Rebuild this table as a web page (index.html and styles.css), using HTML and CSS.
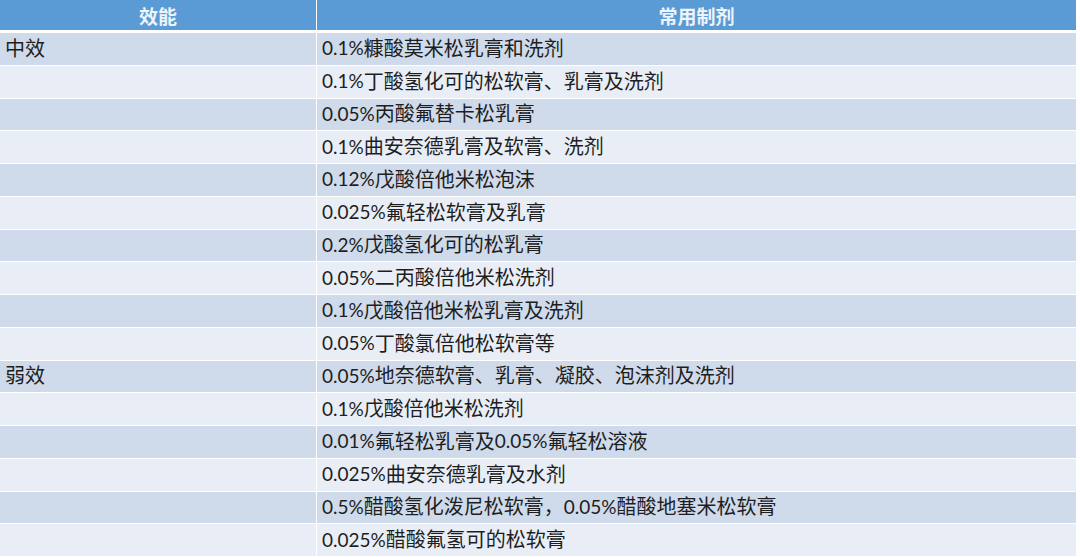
FILE: index.html
```html
<!DOCTYPE html>
<html lang="zh">
<head>
<meta charset="utf-8">
<title>效能 常用制剂</title>
<link rel="stylesheet" href="styles.css">
</head>
<body>
<div class="table">
  <div class="head">效能</div>
  <div class="head">常用制剂</div>

  <div class="c1 d">中效</div><div class="c2 d"><span class="n">0.1%</span>糠酸莫米松乳膏和洗剂</div>
  <div class="c1 l"></div><div class="c2 l"><span class="n">0.1%</span>丁酸氢化可的松软膏、乳膏及洗剂</div>
  <div class="c1 d"></div><div class="c2 d"><span class="n">0.05%</span>丙酸氟替卡松乳膏</div>
  <div class="c1 l"></div><div class="c2 l"><span class="n">0.1%</span>曲安奈德乳膏及软膏、洗剂</div>
  <div class="c1 d"></div><div class="c2 d"><span class="n">0.12%</span>戊酸倍他米松泡沫</div>
  <div class="c1 l"></div><div class="c2 l"><span class="n">0.025%</span>氟轻松软膏及乳膏</div>
  <div class="c1 d"></div><div class="c2 d"><span class="n">0.2%</span>戊酸氢化可的松乳膏</div>
  <div class="c1 l"></div><div class="c2 l"><span class="n">0.05%</span>二丙酸倍他米松洗剂</div>
  <div class="c1 d"></div><div class="c2 d"><span class="n">0.1%</span>戊酸倍他米松乳膏及洗剂</div>
  <div class="c1 l"></div><div class="c2 l"><span class="n">0.05%</span>丁酸氯倍他松软膏等</div>
  <div class="c1 d">弱效</div><div class="c2 d"><span class="n">0.05%</span>地奈德软膏、乳膏、凝胶、泡沫剂及洗剂</div>
  <div class="c1 l"></div><div class="c2 l"><span class="n">0.1%</span>戊酸倍他米松洗剂</div>
  <div class="c1 d"></div><div class="c2 d"><span class="n">0.01%</span>氟轻松乳膏及<span class="n">0.05%</span>氟轻松溶液</div>
  <div class="c1 l"></div><div class="c2 l"><span class="n">0.025%</span>曲安奈德乳膏及水剂</div>
  <div class="c1 d"></div><div class="c2 d"><span class="n">0.5%</span>醋酸氢化泼尼松软膏，<span class="n">0.05%</span>醋酸地塞米松软膏</div>
  <div class="c1 l"></div><div class="c2 l"><span class="n">0.025%</span>醋酸氟氢可的松软膏</div>
</div>
</body>
</html>
```

FILE: styles.css
```css
html, body {
  margin: 0;
  padding: 0;
  background: #ffffff;
  overflow: hidden;
}
body {
  width: 1080px;
  height: 557px;
  font-family: "Noto Sans CJK SC", "Noto Sans", sans-serif;
  color: #1e1e1e;
}
.table {
  width: 1076px;
  display: grid;
  grid-template-columns: 316px 1fr;
  grid-template-rows: 32px repeat(16, 31.75px);
  column-gap: 1px;
  row-gap: 1px;
  background: #ffffff;
}
.head {
  align-self: start;
  height: 30px;
  background: #5b9bd5;
  color: #eef4fb;
  font-weight: bold;
  font-size: 19px;
  display: flex;
  align-items: center;
  justify-content: center;
}
.c1, .c2 {
  display: flex;
  align-items: center;
  font-size: 20px;
  white-space: nowrap;
  line-height: 1;
  padding-left: 5px;
  padding-bottom: 2px;
  box-sizing: border-box;
}
.d {
  background: #cfdaea;
}
.l {
  background: #e9eef6;
}
.n {
  font-family: "Lato", "Noto Sans", sans-serif;
  font-size: 19px;
}
```
